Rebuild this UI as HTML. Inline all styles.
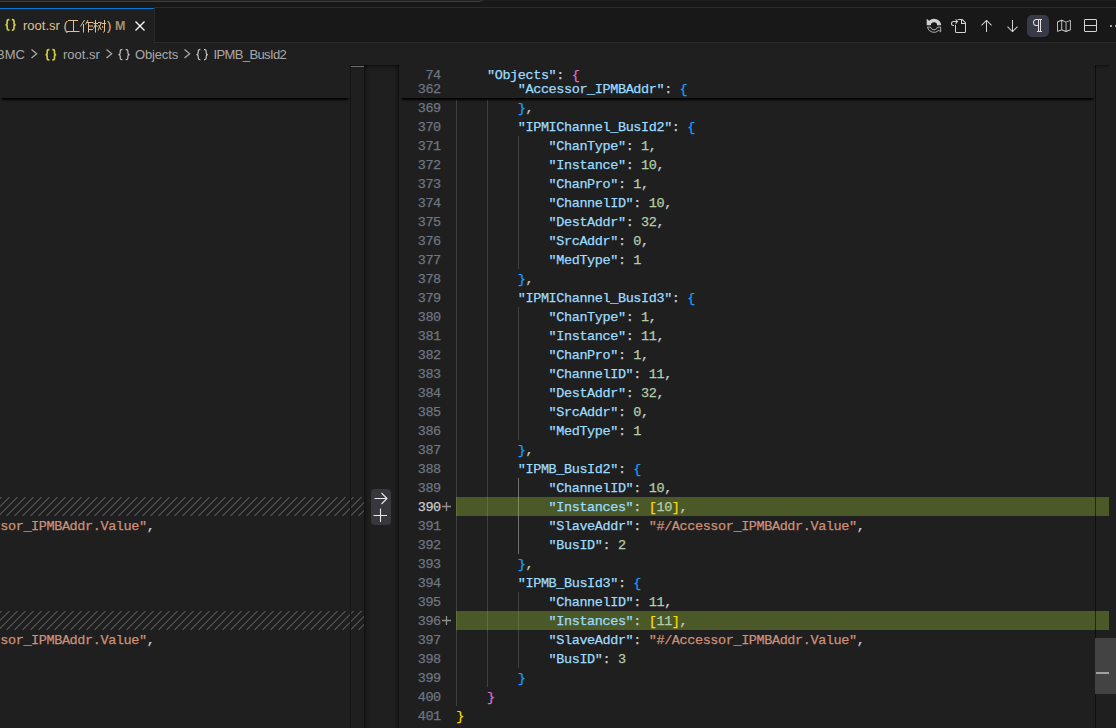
<!DOCTYPE html>
<html><head><meta charset="utf-8">
<style>
*{margin:0;padding:0;box-sizing:border-box}
html,body{width:1116px;height:728px;overflow:hidden;background:#1f1f1f}
body{position:relative;font-family:"Liberation Sans",sans-serif;font-size:13px;color:#ccc}
.abs{position:absolute}
.ui{position:absolute;white-space:pre;font-family:"Liberation Sans",sans-serif;font-size:13px;line-height:22px;height:22px}
.ln,.cl{position:absolute;height:19px;line-height:19px;font-family:"Liberation Mono",monospace;font-size:13.5px;letter-spacing:-0.4px;white-space:pre;padding-top:1px;-webkit-text-stroke:0.25px currentColor}
.ln{left:400px;width:40.8px;text-align:right;color:#6e7681}
.ln.act{color:#ccc}
.cl{left:456.2px;color:#ccc}
.g{position:absolute;width:1px}
.hatch{position:absolute;left:0;width:364px;height:19px;background-image:linear-gradient(-45deg,#484848 12.5%,transparent 12.5%,transparent 50%,#484848 50%,#484848 62.5%,transparent 62.5%,transparent 100%);background-size:8px 8px;background-position:2px 0}
.ins{position:absolute;left:456px;width:653px;height:19px;background:rgba(156,195,62,0.36)}
svg{position:absolute;overflow:visible}
</style></head><body>
<!-- top strip -->
<div class="abs" style="left:0;top:0;width:1116px;height:8px;background:#181818"></div>
<div class="abs" style="left:0;top:0;width:1116px;height:1px;background:#202020"></div>
<div class="abs" style="left:-10px;top:-8px;width:495px;height:10px;border:1px solid #3e3e3e;border-radius:0 0 6px 6px;background:#222"></div>
<div class="abs" style="left:0;top:7px;width:1116px;height:1px;background:#2b2b2b"></div>
<!-- tab bar -->
<div class="abs" style="left:0;top:8px;width:1116px;height:35px;background:#181818"></div>
<div class="abs" style="left:0;top:42px;width:1116px;height:1px;background:#2b2b2b"></div>
<div class="abs" style="left:0;top:7px;width:155px;height:36px;background:#1f1f1f;border-right:1px solid #2b2b2b"></div>
<div class="abs" style="left:0;top:7px;width:154px;height:1px;background:#1b1a1a"></div>
<div class="abs" style="left:0;top:8px;width:154px;height:1px;background:#0078d4"></div>
<!-- toolbar -->
<div class="abs" style="left:1027px;top:15px;width:22px;height:22px;border-radius:5px;background:#383a48"></div>
<svg style="left:926px;top:18px" width="16" height="16" viewBox="0 0 16 16">
<path d="M0.7 0.7V7.3H4.9A3.1 3.1 0 0 1 11.1 7.3H15.2A7.2 7.2 0 0 0 3.1 2.7Z" fill="#d0d0d0"/>
<path transform="rotate(180 8 7.9)" d="M1.3 1.9V6.7H4.5A3.6 3.6 0 0 1 11.5 6.7H14.6A6.7 6.7 0 0 0 3.2 3.5Z" fill="none" stroke="#c0c0c0" stroke-width="0.9"/>
</svg>
<svg style="left:950.3px;top:18px" width="16" height="16" viewBox="0 0 16 16"><path fill="#d4d4d4" d="M6 5.914l2.06-2.06v-.708L5.915 1l-.707.707.043.043.25.25 1 1h-3a2.5 2.5 0 0 0 0 5H4V7h-.5a1.5 1.5 0 1 1 0-3h3L5.207 5.293 5.914 6 6 5.914zM11 2H8.328l-1-1H12l.71.29 3 3L16 5v9l-1 1H6l-1-1V6.5l1 .847V14h9V6h-4V2zm1 0v3h3l-3-3z"/></svg>
<svg style="left:978px;top:18px" width="16" height="16" viewBox="0 0 16 16"><path fill="#d4d4d4" d="M13.854 7l-5-5h-.707l-5 5 .707.707L8 3.561V14h1V3.56l4.146 4.147.708-.707z"/></svg>
<svg style="left:1004px;top:18px" width="16" height="16" viewBox="0 0 16 16"><path fill="#d4d4d4" d="M3.147 9l5 5h.707l5-5-.707-.707L9 12.439V2H8v10.44L3.854 8.292 3.147 9z"/></svg>
<svg style="left:1030px;top:18px" width="16" height="16" viewBox="0 0 16 16"><path fill="#e0e0e0" d="M12 2V1H6.500a3.500 3.500 0 0 0 0 7H8v5H7v1h5v-1h-1V2h1zM8 7H6.500a2.500 2.500 0 1 1 0-5H8v5zm2 6H9V2h1v11z"/></svg>
<svg style="left:1057.1px;top:19.1px" width="13.8" height="13.8" viewBox="0 0 16 16"><path fill="#d4d4d4" fill-rule="evenodd" d="M15.480 1.110l-5 2L5.720 1H5.300l-5 2-.300.490V14.500l.690.390L5.540 13l4.740 2h.420l5-2 .300-.500v-11l-.520-.390zM5 12.140l-4 1.620V3.820l4-1.600v9.920zm5 1.580l-4-1.600V2.260l4 1.600v9.860zm5-1.580l-4 1.600V3.820l4-1.600v9.920z"/></svg>
<svg style="left:1082px;top:18px" width="16" height="16" viewBox="0 0 16 16"><path fill="#d4d4d4" fill-rule="evenodd" d="M14 1H3L2 2v11l1 1h11l1-1V2l-1-1zm0 12H3V8h11v5zm0-6H3V2h11v5z"/></svg>
<svg style="left:1108px;top:18px" width="16" height="16" viewBox="0 0 16 16"><path fill="#d4d4d4" d="M4 8a1 1 0 1 1-2 0 1 1 0 0 1 2 0zm5 0a1 1 0 1 1-2 0 1 1 0 0 1 2 0zm5 0a1 1 0 1 1-2 0 1 1 0 0 1 2 0z"/></svg>
<!-- tab content -->
<div class="ui" id="tabname" style="left:23px;top:15px;color:#e2c08d">root.sr (</div>
<div class="ui" id="tabname2" style="left:107px;top:15px;color:#e2c08d">)</div>
<div class="ui" id="tabM" style="left:115px;top:15px;color:#a48f6e;font-weight:bold;font-size:12.5px">M</div>
<svg style="left:135px;top:21px" width="10" height="10" viewBox="0 0 10 10"><path d="M0.5 0.5L9.5 9.5M9.5 0.5L0.5 9.5" stroke="#fff" stroke-width="1.3" fill="none"/></svg>
<svg style="left:0;top:0" width="160" height="43" viewBox="0 0 160 43"><g stroke="#e2c08d" stroke-width="1" fill="none">
<path d="M68 20.5H78M73.5 20.5V31M66.5 31.5H79.5"/>
<path d="M84.5 20L80.5 26.5M83.5 24V32.5M88 20L85.5 24.5M87 22.5H93.5M88.5 22.5V32.5M88.5 26H93M88.5 29.5H93"/>
<path d="M93.5 23.5H98M95.5 20V32.5M95.5 24L93.5 28.5M95.8 25L97.5 27M98 22.5H101.3M101.3 22.5L98 30.5M98.5 25L101.5 30M101.5 23.5H106M104.5 20V31.5L103 32.3M102.3 26L103 27.8"/>
</g></svg>
<!-- breadcrumbs -->
<svg style="left:4.9px;top:19.4px" width="11.2" height="11.7" viewBox="0 0 11.2 11.7"><g fill="none" stroke="#cbcb41" stroke-width="1.7"><path transform="translate(0.00 0)" d="M4.4 0.6 H3.7 Q2.2 0.6 2.2 2.1 V4.25 Q2.2 5.85 0.5 5.85 Q2.2 5.85 2.2 7.45 V9.60 Q2.2 11.10 3.7 11.10 H4.4"/><path transform="translate(11.20 0) scale(-1 1)" d="M4.4 0.6 H3.7 Q2.2 0.6 2.2 2.1 V4.25 Q2.2 5.85 0.5 5.85 Q2.2 5.85 2.2 7.45 V9.60 Q2.2 11.10 3.7 11.10 H4.4"/></g></svg>
<svg style="left:45.4px;top:49px" width="11.7" height="11.5" viewBox="0 0 11.7 11.5"><g fill="none" stroke="#cbcb41" stroke-width="1.7"><path transform="translate(0.00 0)" d="M4.4 0.6 H3.7 Q2.2 0.6 2.2 2.1 V4.15 Q2.2 5.75 0.5 5.75 Q2.2 5.75 2.2 7.35 V9.40 Q2.2 10.90 3.7 10.90 H4.4"/><path transform="translate(11.70 0) scale(-1 1)" d="M4.4 0.6 H3.7 Q2.2 0.6 2.2 2.1 V4.15 Q2.2 5.75 0.5 5.75 Q2.2 5.75 2.2 7.35 V9.40 Q2.2 10.90 3.7 10.90 H4.4"/></g></svg>
<svg style="left:118px;top:49.2px" width="12.1" height="11.2" viewBox="0 0 12.1 11.2"><g fill="none" stroke="#c8c8c8" stroke-width="1.15"><path transform="translate(0.00 0)" d="M4.4 0.6 H3.7 Q2.2 0.6 2.2 2.1 V4.00 Q2.2 5.60 0.5 5.60 Q2.2 5.60 2.2 7.20 V9.10 Q2.2 10.60 3.7 10.60 H4.4"/><path transform="translate(12.10 0) scale(-1 1)" d="M4.4 0.6 H3.7 Q2.2 0.6 2.2 2.1 V4.00 Q2.2 5.60 0.5 5.60 Q2.2 5.60 2.2 7.20 V9.10 Q2.2 10.60 3.7 10.60 H4.4"/></g></svg>
<svg style="left:196.1px;top:49.2px" width="12.4" height="11.2" viewBox="0 0 12.4 11.2"><g fill="none" stroke="#c8c8c8" stroke-width="1.15"><path transform="translate(0.00 0)" d="M4.4 0.6 H3.7 Q2.2 0.6 2.2 2.1 V4.00 Q2.2 5.60 0.5 5.60 Q2.2 5.60 2.2 7.20 V9.10 Q2.2 10.60 3.7 10.60 H4.4"/><path transform="translate(12.40 0) scale(-1 1)" d="M4.4 0.6 H3.7 Q2.2 0.6 2.2 2.1 V4.00 Q2.2 5.60 0.5 5.60 Q2.2 5.60 2.2 7.20 V9.10 Q2.2 10.60 3.7 10.60 H4.4"/></g></svg>

<div class="ui" id="bc1" style="left:-4px;top:44px;color:#a9a9a9">BMC</div>
<div class="ui" id="bc2" style="left:63px;top:44px;color:#a9a9a9">root.sr</div>
<div class="ui" id="bc3" style="left:135px;top:44px;color:#a9a9a9;letter-spacing:-0.15px">Objects</div>
<div class="ui" id="bc4" style="left:213.5px;top:44px;color:#a9a9a9;letter-spacing:-0.62px">IPMB_BusId2</div>
<svg style="left:30.5px;top:49.3px" width="6.4" height="9.6" viewBox="0 0 6.4 9.6"><path d="M0.5 0.5L5.7 4.8L0.5 9.1" stroke="#a9a9a9" stroke-width="1.25" fill="none"/></svg>
<svg style="left:105.5px;top:49.3px" width="6.4" height="9.6" viewBox="0 0 6.4 9.6"><path d="M0.5 0.5L5.7 4.8L0.5 9.1" stroke="#a9a9a9" stroke-width="1.25" fill="none"/></svg>
<svg style="left:184.3px;top:49.3px" width="6.4" height="9.6" viewBox="0 0 6.4 9.6"><path d="M0.5 0.5L5.7 4.8L0.5 9.1" stroke="#a9a9a9" stroke-width="1.25" fill="none"/></svg>
<!-- left editor -->
<div class="hatch" style="top:497px"></div>
<div class="hatch" style="top:611px"></div>
<div class="cl" style="left:-7.4px;top:516px"><span style="color:#ce9178">ssor_IPMBAddr.Value"</span>,</div>
<div class="cl" style="left:-7.4px;top:630px"><span style="color:#ce9178">ssor_IPMBAddr.Value"</span>,</div>
<div class="abs" style="left:0;top:65px;width:350px;height:33px;background:#1f1f1f;box-shadow:0 4px 2px -2px #000"></div>
<div class="abs" style="left:350px;top:65px;width:1px;height:663px;background:#141414"></div>
<div class="abs" style="left:350px;top:65px;width:15px;height:1px;background:#161616"></div>
<div class="abs" style="left:351px;top:66px;width:13px;height:1px;background:#6c6c6c"></div>
<!-- gutter -->
<div class="abs" style="left:364px;top:65px;width:35px;height:700px;background:#1f1f1f;box-shadow:inset 0 0 5px 0 #000"></div>
<div class="abs" style="left:371px;top:489px;width:20px;height:36px;border-radius:4px;background:#37373d"></div>
<svg style="left:374px;top:492px" width="14" height="13" viewBox="0 0 14 13"><path d="M0.5 6.5H12.5M7.5 1L13 6.5L7.5 12" stroke="#e8e8e8" stroke-width="1.1" fill="none"/></svg>
<svg style="left:373px;top:508px" width="14" height="14" viewBox="0 0 14 14"><path d="M0.5 7.5H14M7.5 0.5V14" stroke="#e8e8e8" stroke-width="1.1" fill="none"/></svg>
<!-- right editor -->
<div class="g" style="left:456px;top:99px;height:607px;background:#404040"></div>
<div class="g" style="left:487px;top:99px;height:588px;background:#404040"></div>
<div class="g" style="left:518px;top:136px;height:133px;background:#404040"></div>
<div class="g" style="left:518px;top:307px;height:133px;background:#404040"></div>
<div class="g" style="left:518px;top:478px;height:76px;background:#707070"></div>
<div class="g" style="left:518px;top:592px;height:76px;background:#404040"></div>
<div class="ins" style="top:497px"></div>
<div class="ins" style="top:611px"></div>
<div class="ln" style="top:98px">369</div>
<div class="cl" style="top:98px">        <span style="color:#179fff">}</span><span style="color:#cccccc">,</span></div>
<div class="ln" style="top:117px">370</div>
<div class="cl" style="top:117px">        <span style="color:#9cdcfe">"IPMIChannel_BusId2"</span><span style="color:#cccccc">:</span> <span style="color:#179fff">{</span></div>
<div class="ln" style="top:136px">371</div>
<div class="cl" style="top:136px">            <span style="color:#9cdcfe">"ChanType"</span><span style="color:#cccccc">:</span> <span style="color:#b5cea8">1</span><span style="color:#cccccc">,</span></div>
<div class="ln" style="top:155px">372</div>
<div class="cl" style="top:155px">            <span style="color:#9cdcfe">"Instance"</span><span style="color:#cccccc">:</span> <span style="color:#b5cea8">10</span><span style="color:#cccccc">,</span></div>
<div class="ln" style="top:174px">373</div>
<div class="cl" style="top:174px">            <span style="color:#9cdcfe">"ChanPro"</span><span style="color:#cccccc">:</span> <span style="color:#b5cea8">1</span><span style="color:#cccccc">,</span></div>
<div class="ln" style="top:193px">374</div>
<div class="cl" style="top:193px">            <span style="color:#9cdcfe">"ChannelID"</span><span style="color:#cccccc">:</span> <span style="color:#b5cea8">10</span><span style="color:#cccccc">,</span></div>
<div class="ln" style="top:212px">375</div>
<div class="cl" style="top:212px">            <span style="color:#9cdcfe">"DestAddr"</span><span style="color:#cccccc">:</span> <span style="color:#b5cea8">32</span><span style="color:#cccccc">,</span></div>
<div class="ln" style="top:231px">376</div>
<div class="cl" style="top:231px">            <span style="color:#9cdcfe">"SrcAddr"</span><span style="color:#cccccc">:</span> <span style="color:#b5cea8">0</span><span style="color:#cccccc">,</span></div>
<div class="ln" style="top:250px">377</div>
<div class="cl" style="top:250px">            <span style="color:#9cdcfe">"MedType"</span><span style="color:#cccccc">:</span> <span style="color:#b5cea8">1</span></div>
<div class="ln" style="top:269px">378</div>
<div class="cl" style="top:269px">        <span style="color:#179fff">}</span><span style="color:#cccccc">,</span></div>
<div class="ln" style="top:288px">379</div>
<div class="cl" style="top:288px">        <span style="color:#9cdcfe">"IPMIChannel_BusId3"</span><span style="color:#cccccc">:</span> <span style="color:#179fff">{</span></div>
<div class="ln" style="top:307px">380</div>
<div class="cl" style="top:307px">            <span style="color:#9cdcfe">"ChanType"</span><span style="color:#cccccc">:</span> <span style="color:#b5cea8">1</span><span style="color:#cccccc">,</span></div>
<div class="ln" style="top:326px">381</div>
<div class="cl" style="top:326px">            <span style="color:#9cdcfe">"Instance"</span><span style="color:#cccccc">:</span> <span style="color:#b5cea8">11</span><span style="color:#cccccc">,</span></div>
<div class="ln" style="top:345px">382</div>
<div class="cl" style="top:345px">            <span style="color:#9cdcfe">"ChanPro"</span><span style="color:#cccccc">:</span> <span style="color:#b5cea8">1</span><span style="color:#cccccc">,</span></div>
<div class="ln" style="top:364px">383</div>
<div class="cl" style="top:364px">            <span style="color:#9cdcfe">"ChannelID"</span><span style="color:#cccccc">:</span> <span style="color:#b5cea8">11</span><span style="color:#cccccc">,</span></div>
<div class="ln" style="top:383px">384</div>
<div class="cl" style="top:383px">            <span style="color:#9cdcfe">"DestAddr"</span><span style="color:#cccccc">:</span> <span style="color:#b5cea8">32</span><span style="color:#cccccc">,</span></div>
<div class="ln" style="top:402px">385</div>
<div class="cl" style="top:402px">            <span style="color:#9cdcfe">"SrcAddr"</span><span style="color:#cccccc">:</span> <span style="color:#b5cea8">0</span><span style="color:#cccccc">,</span></div>
<div class="ln" style="top:421px">386</div>
<div class="cl" style="top:421px">            <span style="color:#9cdcfe">"MedType"</span><span style="color:#cccccc">:</span> <span style="color:#b5cea8">1</span></div>
<div class="ln" style="top:440px">387</div>
<div class="cl" style="top:440px">        <span style="color:#179fff">}</span><span style="color:#cccccc">,</span></div>
<div class="ln" style="top:459px">388</div>
<div class="cl" style="top:459px">        <span style="color:#9cdcfe">"IPMB_BusId2"</span><span style="color:#cccccc">:</span> <span style="color:#179fff">{</span></div>
<div class="ln" style="top:478px">389</div>
<div class="cl" style="top:478px">            <span style="color:#9cdcfe">"ChannelID"</span><span style="color:#cccccc">:</span> <span style="color:#b5cea8">10</span><span style="color:#cccccc">,</span></div>
<div class="ln act" style="top:497px">390</div>
<div class="cl" style="top:497px">            <span style="color:#9cdcfe">"Instances"</span><span style="color:#cccccc">:</span> <span style="color:#ffd700">[</span><span style="color:#b5cea8">10</span><span style="color:#ffd700">]</span><span style="color:#cccccc">,</span></div>
<div class="ln" style="top:516px">391</div>
<div class="cl" style="top:516px">            <span style="color:#9cdcfe">"SlaveAddr"</span><span style="color:#cccccc">:</span> <span style="color:#ce9178">"#/Accessor_IPMBAddr.Value"</span><span style="color:#cccccc">,</span></div>
<div class="ln" style="top:535px">392</div>
<div class="cl" style="top:535px">            <span style="color:#9cdcfe">"BusID"</span><span style="color:#cccccc">:</span> <span style="color:#b5cea8">2</span></div>
<div class="ln" style="top:554px">393</div>
<div class="cl" style="top:554px">        <span style="color:#179fff">}</span><span style="color:#cccccc">,</span></div>
<div class="ln" style="top:573px">394</div>
<div class="cl" style="top:573px">        <span style="color:#9cdcfe">"IPMB_BusId3"</span><span style="color:#cccccc">:</span> <span style="color:#179fff">{</span></div>
<div class="ln" style="top:592px">395</div>
<div class="cl" style="top:592px">            <span style="color:#9cdcfe">"ChannelID"</span><span style="color:#cccccc">:</span> <span style="color:#b5cea8">11</span><span style="color:#cccccc">,</span></div>
<div class="ln" style="top:611px">396</div>
<div class="cl" style="top:611px">            <span style="color:#9cdcfe">"Instances"</span><span style="color:#cccccc">:</span> <span style="color:#ffd700">[</span><span style="color:#b5cea8">11</span><span style="color:#ffd700">]</span><span style="color:#cccccc">,</span></div>
<div class="ln" style="top:630px">397</div>
<div class="cl" style="top:630px">            <span style="color:#9cdcfe">"SlaveAddr"</span><span style="color:#cccccc">:</span> <span style="color:#ce9178">"#/Accessor_IPMBAddr.Value"</span><span style="color:#cccccc">,</span></div>
<div class="ln" style="top:649px">398</div>
<div class="cl" style="top:649px">            <span style="color:#9cdcfe">"BusID"</span><span style="color:#cccccc">:</span> <span style="color:#b5cea8">3</span></div>
<div class="ln" style="top:668px">399</div>
<div class="cl" style="top:668px">        <span style="color:#179fff">}</span></div>
<div class="ln" style="top:687px">400</div>
<div class="cl" style="top:687px">    <span style="color:#da70d6">}</span></div>
<div class="ln" style="top:706px">401</div>
<div class="cl" style="top:706px"><span style="color:#ffd700">}</span></div>
<!-- plus markers -->
<svg style="left:442px;top:502px" width="9" height="9" viewBox="0 0 9 9"><path d="M0 4.5H9M4.5 0V9" stroke="#8f8f8f" stroke-width="1.3" fill="none"/></svg>
<svg style="left:442px;top:616px" width="9" height="9" viewBox="0 0 9 9"><path d="M0 4.5H9M4.5 0V9" stroke="#8f8f8f" stroke-width="1.3" fill="none"/></svg>
<!-- sticky scroll -->
<div class="abs" style="left:400px;top:65px;width:695px;height:33px;box-shadow:0 4px 2px -2px #000"></div>
<div class="abs" style="left:400px;top:65px;width:695px;height:33px;background:#1f1f1f;overflow:hidden">
 <div class="ln" style="left:0;top:14px">362</div>
 <div class="cl" style="left:56.2px;top:14px">        <span style="color:#9cdcfe">"Accessor_IPMBAddr"</span>: <span style="color:#179fff">{</span></div>
 <div class="abs" style="left:0;top:0;width:696px;height:19px;background:#1f1f1f"></div>
 <div class="ln" style="left:0;top:0">74</div>
 <div class="cl" style="left:56.2px;top:0">    <span style="color:#9cdcfe">"Objects"</span>: <span style="color:#da70d6">{</span></div>
</div>
<!-- scrollbar -->
<div class="abs" style="left:1095px;top:65px;width:14px;height:4px;background:linear-gradient(180deg,rgba(0,0,0,.55) 0,rgba(0,0,0,.2) 1.5px,rgba(0,0,0,0) 4px)"></div>
<div class="abs" style="left:1095px;top:65px;width:1px;height:663px;background:rgba(0,0,0,.55)"></div>
<div class="abs" style="left:1095px;top:638px;width:21px;height:56px;background:#434343"></div>
<div class="abs" style="left:1096px;top:672px;width:13px;height:2px;background:#a0a0a0"></div>
</body></html>
